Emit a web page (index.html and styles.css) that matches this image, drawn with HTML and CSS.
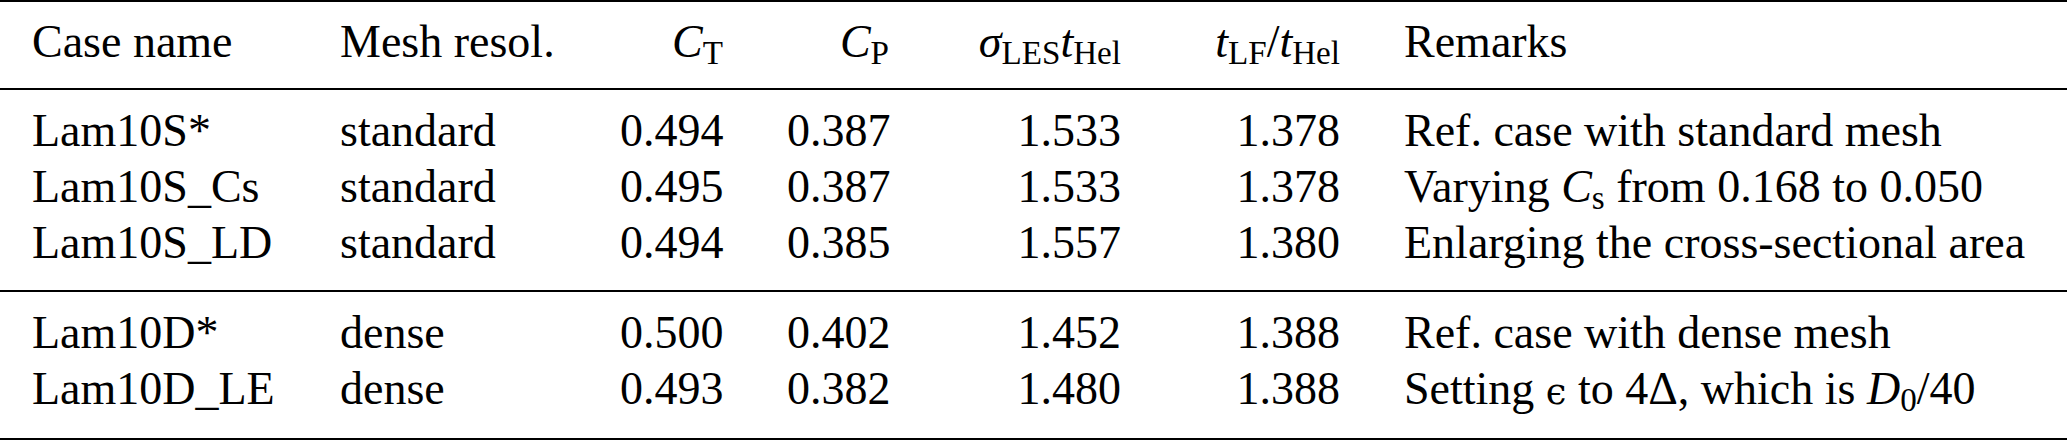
FILE: index.html
```html
<html>
<head>
    <title>LES cases</title>
    <link rel="stylesheet" href="styles.css">
</head>
<body>
    <table class="cases">
        <thead>
            <tr>
                <th class="col-name">Case name</th>
                <th class="col-mesh">Mesh resol.</th>
                <th class="col-ct num"><var>C</var><span class="sub">T</span></th>
                <th class="col-cp num"><var>C</var><span class="sub">P</span></th>
                <th class="col-sig num"><var>σ</var><span class="sub">LES</span><var>t</var><span class="sub">Hel</span></th>
                <th class="col-tlf num"><var>t</var><span class="sub">LF</span>/<var>t</var><span class="sub">Hel</span></th>
                <th class="col-rem">Remarks</th>
            </tr>
        </thead>
        <tbody>
            <tr class="first">
                <td>Lam10S*</td>
                <td>standard</td>
                <td class="num">0.494</td>
                <td class="num">0.387</td>
                <td class="num">1.533</td>
                <td class="num">1.378</td>
                <td>Ref. case with standard mesh</td>
            </tr>
            <tr>
                <td>Lam10S_Cs</td>
                <td>standard</td>
                <td class="num">0.495</td>
                <td class="num">0.387</td>
                <td class="num">1.533</td>
                <td class="num">1.378</td>
                <td>Varying <var>C</var><span class="sub">s</span> from 0.168 to 0.050</td>
            </tr>
            <tr class="last">
                <td>Lam10S_LD</td>
                <td>standard</td>
                <td class="num">0.494</td>
                <td class="num">0.385</td>
                <td class="num">1.557</td>
                <td class="num">1.380</td>
                <td>Enlarging the cross-sectional area</td>
            </tr>
        </tbody>
        <tbody>
            <tr class="first">
                <td>Lam10D*</td>
                <td>dense</td>
                <td class="num">0.500</td>
                <td class="num">0.402</td>
                <td class="num">1.452</td>
                <td class="num">1.388</td>
                <td>Ref. case with dense mesh</td>
            </tr>
            <tr class="last">
                <td>Lam10D_LE</td>
                <td>dense</td>
                <td class="num">0.493</td>
                <td class="num">0.382</td>
                <td class="num">1.480</td>
                <td class="num">1.388</td>
                <td>Setting <span class="eps">ϵ</span> to 4Δ, which is <var>D</var><span class="sub">0</span>/40</td>
            </tr>
        </tbody>
    </table>
</body>
</html>
```

FILE: styles.css
```css
body {
    margin: 0;
    background-color: white;
    color: #000;
    font-family: "Liberation Serif", "DejaVu Serif", serif;
}

.cases {
    width: 2067px;
    table-layout: fixed;
    border-collapse: separate;
    border-spacing: 0;
    font-size: 46px;
    line-height: 56px;
}

.cases th,
.cases td {
    box-sizing: border-box;
    padding: 0 32px;
    text-align: left;
    font-weight: normal;
    white-space: nowrap;
    vertical-align: baseline;
}

.cases th {
    padding-top: 12px;
    padding-bottom: 18px;
    border-top: 2px solid #000;
    border-bottom: 2px solid #000;
}

.cases .num {
    text-align: right;
}

.col-name { width: 308px; }
.col-mesh { width: 280px; }
.col-ct { width: 167px; }
.col-cp { width: 166px; }
.col-sig { width: 232px; }
.col-tlf { width: 219px; }
.col-rem { width: 695px; }

.cases tr.first td {
    padding-top: 13px;
}

.cases tr.last td {
    padding-bottom: 18px;
    border-bottom: 2px solid #000;
}

.cases tbody:first-of-type tr.last td {
    padding-bottom: 19px;
}

var {
    font-style: italic;
}

.sub {
    font-size: 0.72em;
    line-height: 0;
    vertical-align: -0.2em;
}

.eps {
    font-family: "DejaVu Serif", serif;
    font-size: 0.8em;
}
```
